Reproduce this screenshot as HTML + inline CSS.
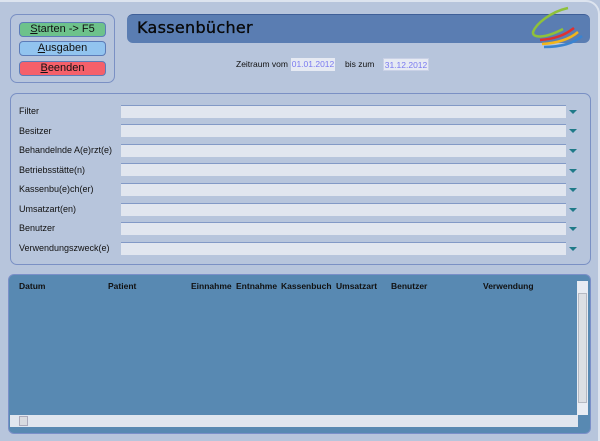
<!DOCTYPE html><html><head><style>
body{margin:0;width:600px;height:441px;background:#b7c5dc;font-family:"Liberation Sans",sans-serif;font-size:9px;position:relative;overflow:hidden;color:#111}
div{position:absolute;box-sizing:border-box}
.btn{left:19px;width:87px;height:15px;border:1px solid #5c7cb8;border-radius:4px;text-align:center;font-size:11px;line-height:13px}
.lbl{left:19px}
.in{left:121px;width:445px;height:13px;background:#e1e6ef;border-top:1px solid #8299c6}
.ar{left:569px;width:0;height:0;border-left:4px solid transparent;border-right:4px solid transparent;border-top:4px solid #1f7a88}
.h{top:281px;font-weight:bold;font-size:8.5px}
.d{top:58px;height:13px;background:#e6eaf3;color:#7a7af0;font-size:8.5px;line-height:13px;text-align:center}
</style></head><body>
<div style="left:0;top:0;width:600px;height:441px;border-top:2px solid #dde4ef;border-right:2px solid #dde4ef;border-radius:0 14px 0 0"></div>
<div style="left:10px;top:14px;width:105px;height:69px;border:1px solid #7a90c4;border-radius:7px"></div>
<div class="btn" style="top:22px;background:#6dc28b"><u>S</u>tarten -&gt; F5</div>
<div class="btn" style="top:41px;background:#92c4ef"><u>A</u>usgaben</div>
<div class="btn" style="top:61px;background:#f5606a"><u>B</u>eenden</div>
<div style="left:127px;top:14px;width:463px;height:29px;background:#5a7db2;border-top:1px solid #3f5f98;border-radius:6px"></div>
<div style="left:137px;top:18px;font-family:'Comic Sans MS','DejaVu Sans',sans-serif;font-size:16px;color:#0a0a0a;letter-spacing:0.3px;-webkit-text-stroke:0.3px #000">Kassenbücher</div>
<svg style="position:absolute;left:530px;top:6px" width="60" height="44" viewBox="0 0 60 44"><path d="M38 2 C20 6 6 18 3 26 C2 32 14 33 33 23" stroke="#8fc13a" stroke-width="2.5" fill="none"/><path d="M10 34 C25 33 35 29 44 22" stroke="#e03030" stroke-width="2.5" fill="none"/><path d="M12 38 C28 37 40 33 48 26" stroke="#f3b51a" stroke-width="2.5" fill="none"/><path d="M14 41 C32 41 44 37 52 30" stroke="#3a83d0" stroke-width="2.5" fill="none"/></svg>
<div style="left:236px;top:59px;font-size:8.5px">Zeitraum vom</div>
<div class="d" style="left:291px;width:44px">01.01.2012</div>
<div style="left:345px;top:59px;font-size:8.5px">bis zum</div>
<div class="d" style="left:383px;width:46px;border:1px solid #c9d1e6">31.12.2012</div>
<div style="left:10px;top:93px;width:581px;height:172px;border:1px solid #7a90c4;border-radius:7px"></div>
<div class="lbl" style="top:106px">Filter</div><div class="in" style="top:105px"></div><div class="ar" style="top:110px"></div>
<div class="lbl" style="top:126px">Besitzer</div><div class="in" style="top:124px"></div><div class="ar" style="top:129px"></div>
<div class="lbl" style="top:145px">Behandelnde A(e)rzt(e)</div><div class="in" style="top:144px"></div><div class="ar" style="top:149px"></div>
<div class="lbl" style="top:165px">Betriebsstätte(n)</div><div class="in" style="top:163px"></div><div class="ar" style="top:169px"></div>
<div class="lbl" style="top:184px">Kassenbu(e)ch(er)</div><div class="in" style="top:183px"></div><div class="ar" style="top:188px"></div>
<div class="lbl" style="top:204px">Umsatzart(en)</div><div class="in" style="top:203px"></div><div class="ar" style="top:208px"></div>
<div class="lbl" style="top:223px">Benutzer</div><div class="in" style="top:222px"></div><div class="ar" style="top:227px"></div>
<div class="lbl" style="top:243px">Verwendungszweck(e)</div><div class="in" style="top:242px"></div><div class="ar" style="top:247px"></div>
<div style="left:8px;top:274px;width:583px;height:160px;background:#5889b2;border:1px solid #7a8fc8;border-radius:6px"></div>
<div class="h" style="left:19px">Datum</div><div class="h" style="left:108px">Patient</div><div class="h" style="left:191px">Einnahme</div><div class="h" style="left:236px">Entnahme</div><div class="h" style="left:281px">Kassenbuch</div><div class="h" style="left:336px">Umsatzart</div><div class="h" style="left:391px">Benutzer</div><div class="h" style="left:483px">Verwendung</div>
<div style="left:577px;top:281px;width:11px;height:134px;background:#e8ecf3"></div>
<div style="left:578px;top:293px;width:9px;height:110px;background:#dcdfe4;border:1px solid #b5b9c2"></div>
<div style="left:10px;top:415px;width:568px;height:12px;background:#e0e6ef"></div>
<div style="left:19px;top:416px;width:9px;height:10px;background:#d8dbe0;border:1px solid #aab"></div>
</body></html>
